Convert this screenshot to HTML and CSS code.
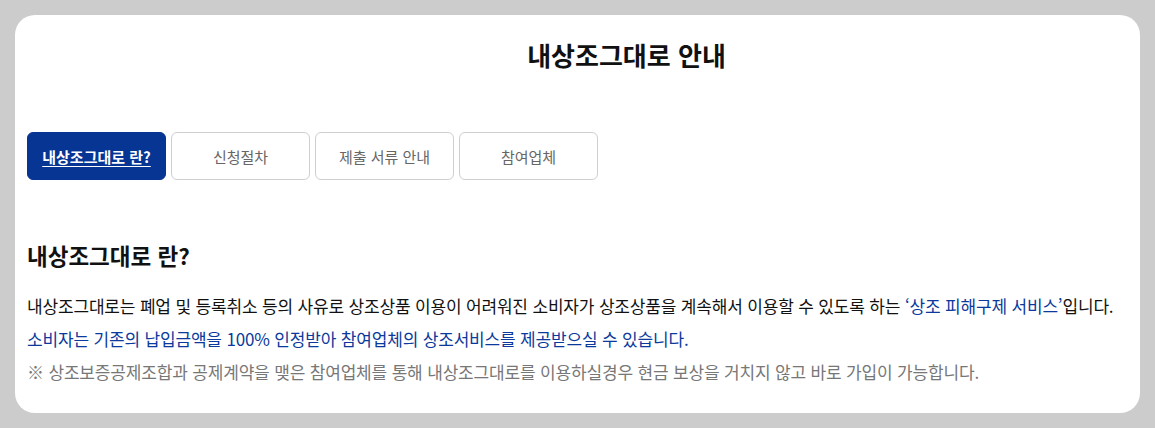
FILE: index.html
```html
<!DOCTYPE html>
<html lang="ko">
<head>
    <meta charset="UTF-8">
    <meta name="viewport" content="width=device-width, initial-scale=1.0">
    <title>내상조그대로 안내</title>
    <link rel="stylesheet" href="styles.css">
</head>
<body>

    <div class="card">
        <h1 class="page-title">내상조그대로 안내</h1>

        <div class="tabs">
            <a href="#" class="tab active">내상조그대로 란?</a>
            <a href="#" class="tab">신청절차</a>
            <a href="#" class="tab">제출 서류 안내</a>
            <a href="#" class="tab">참여업체</a>
        </div>

        <div class="section">
            <h2>내상조그대로 란?</h2>
            <p>내상조그대로는 폐업 및 등록취소 등의 사유로 상조상품 이용이 어려워진 소비자가 상조상품을 계속해서 이용할 수 있도록 하는 <span class="blue">‘상조 피해구제 서비스’</span>입니다.</p>
            <p class="blue">소비자는 기존의 납입금액을 100% 인정받아 참여업체의 상조서비스를 제공받으실 수 있습니다.</p>
            <p class="note">※ 상조보증공제조합과 공제계약을 맺은 참여업체를 통해 내상조그대로를 이용하실경우 현금 보상을 거치지 않고 바로 가입이 가능합니다.</p>
        </div>
    </div>

</body>
</html>
```

FILE: styles.css
```css
body {
    font-family: "Noto Sans CJK KR", "Noto Sans", sans-serif;
    background-color: #cccccc;
    margin: 0;
    padding: 15px;
}
.card {
    background-color: white;
    border-radius: 20px;
    height: 398px;
    box-sizing: border-box;
    padding: 23px 12px 0;
}
.page-title {
    margin: 0;
    padding-left: 98px;
    text-align: center;
    font-size: 26px;
    line-height: 34px;
    font-weight: 700;
    color: #111;
}
.tabs {
    display: flex;
    gap: 5px;
    margin-top: 60px;
}
.tab {
    width: 139px;
    height: 48px;
    box-sizing: border-box;
    display: flex;
    align-items: center;
    justify-content: center;
    border: 1px solid #cfcfcf;
    border-radius: 6px;
    color: #666;
    font-size: 15px;
    text-decoration: none;
}
.tab.active {
    background-color: #063594;
    border-color: #063594;
    color: white;
    font-weight: 700;
    text-decoration: underline;
    text-underline-offset: 3px;
}
.section {
    margin-top: 61px;
}
.section h2 {
    margin: 0 0 20px;
    font-size: 22.5px;
    line-height: 28px;
    font-weight: 700;
    color: #111;
}
.section p {
    margin: 0;
    font-size: 17px;
    letter-spacing: -0.17px;
    line-height: 33px;
    color: #111;
}
.section .blue {
    color: #0b3a9c;
}
.section .note {
    color: #777;
}
```
